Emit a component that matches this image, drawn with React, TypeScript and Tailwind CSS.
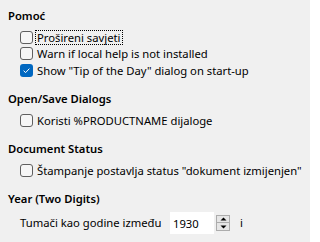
import React from "react";

const CheckBox = ({ checked }: { checked?: boolean }) =>
    checked ? (
        <span className="flex h-[13px] w-[13px] shrink-0 items-center justify-center rounded-[3px] bg-[#0067c0]">
            <svg width="9" height="9" viewBox="0 0 9 9">
                <path d="M1.6 4.7 L3.6 6.6 L7.4 2.6" fill="none" stroke="white" strokeWidth="1" />
            </svg>
        </span>
    ) : (
        <span className="h-[13px] w-[13px] shrink-0 rounded-[3px] border border-[#5f5f5f] bg-[#f6f6f6]" />
    );

const Option = ({ label, checked, focused }: { label: string; checked?: boolean; focused?: boolean }) => (
    <div className="flex h-[16.5px] items-center pl-3">
        <CheckBox checked={checked} />
        <span
            className={`ml-[3px] whitespace-nowrap px-[1px] leading-[13px] ${focused ? "outline outline-1 outline-dotted outline-black" : ""}`}
        >
            {label}
        </span>
    </div>
);

const Heading = ({ children }: { children: React.ReactNode }) => (
    <div className="h-4 font-semibold leading-4">{children}</div>
);

export default function App() {
    return (
        <div
            className="h-[242px] w-[310px] overflow-hidden bg-[#f0f0f0] px-2 pt-2 text-[11.25px] text-black"
            style={{ fontFamily: '"Noto Sans", "Open Sans", sans-serif' }}
        >
            {/* Help */}
            <Heading>Pomoć</Heading>
            <div className="mt-[5px]">
                <Option label="Prošireni savjeti" focused />
                <Option label="Warn if local help is not installed" />
                <Option label={'Show "Tip of the Day" dialog on start-up'} checked />
            </div>

            {/* Open/Save */}
            <div className="mt-[12.5px]">
                <Heading>Open/Save Dialogs</Heading>
                <div className="mt-[5px]">
                    <Option label="Koristi %PRODUCTNAME dijaloge" />
                </div>
            </div>

            {/* Document status */}
            <div className="mt-[12.5px]">
                <Heading>Document Status</Heading>
                <div className="mt-[5px]">
                    <Option label={'Štampanje postavlja status "dokument izmijenjen"'} />
                </div>
            </div>

            {/* Year */}
            <div className="mt-[12.5px]">
                <Heading>Year (Two Digits)</Heading>
                <div className="mt-[4px] flex h-6 items-center pl-3">
                    <span className="w-[150px] whitespace-nowrap">Tumači kao godine između</span>
                    <div className="flex h-[22px] w-[44px] items-center bg-white pl-[3px] pt-[2px]">1930</div>
                    <div className="ml-[2px] flex w-[14px] flex-col">
                        <button className="flex h-2 items-center justify-center border border-[#acacac] bg-[#e6e6e6]">
                            <svg width="7" height="4" viewBox="0 0 7 4">
                                <path d="M0.5 3.5 L3.5 0.5 L6.5 3.5 Z" fill="#000" />
                            </svg>
                        </button>
                        <button className="flex h-2 items-center justify-center border border-t-0 border-[#acacac] bg-[#e6e6e6]">
                            <svg width="7" height="4" viewBox="0 0 7 4">
                                <path d="M0.5 0.5 L3.5 3.5 L6.5 0.5 Z" fill="#000" />
                            </svg>
                        </button>
                    </div>
                    <span className="ml-[10px]">i</span>
                </div>
            </div>
        </div>
    );
}
